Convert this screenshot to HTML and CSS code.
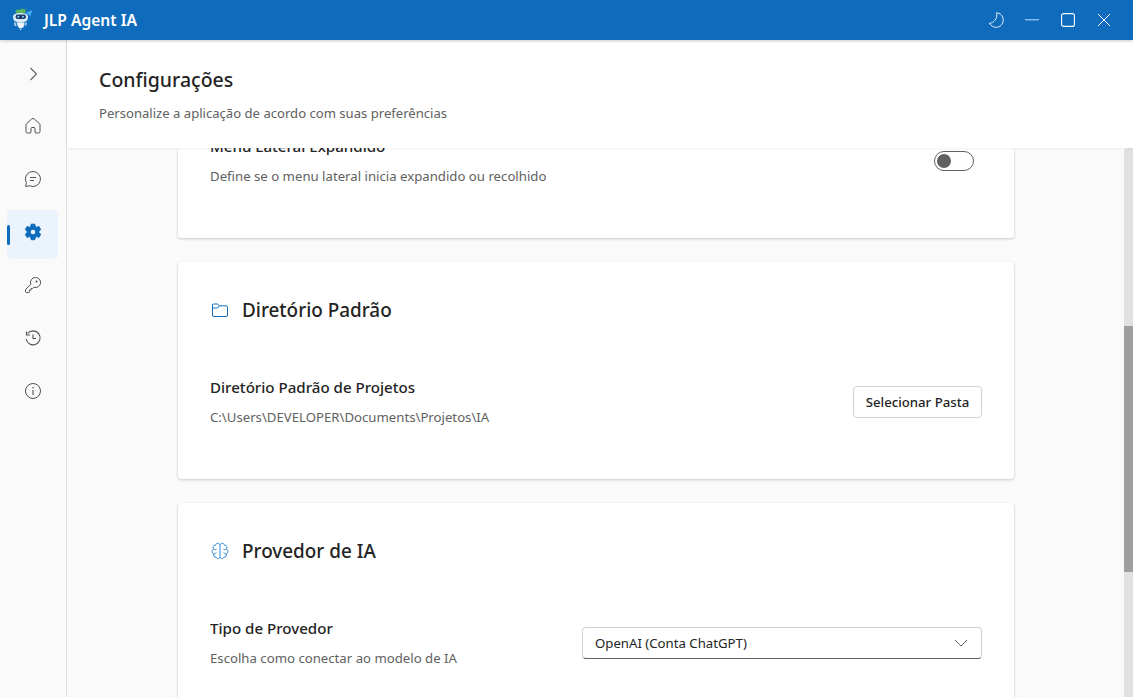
FILE: index.html
```html
<!DOCTYPE html>
<html lang="pt">
<head>
<meta charset="utf-8">
<title>JLP Agent IA</title>
<link rel="stylesheet" href="styles.css">
</head>
<body>
<div class="app">
  <header class="titlebar">
    <div class="brand">
      <svg class="logo" width="24" height="24" viewBox="0 0 24 24">
        <path d="M5 4 L7 1.500 L10 2 L11 .5 L16 1.500 L15 5 L8 5.500 Z" fill="#57b55a"/>
        <path d="M15.500 5 L22.500 2 L20 8.500 L18.500 6.500 Z" fill="#45aef2"/>
        <path d="M3 9 C3 6 6 5 10.500 5 C15 5 18 6 18 9 L17.500 11.500 C17 13.500 14 14.500 10.500 14.500 C7 14.500 4 13.500 3.500 11.500 Z" fill="#dcedf9"/>
        <rect x="5.500" y="6.500" width="10.500" height="4.500" rx="2.200" fill="#1d3a6b"/>
        <circle cx="8.300" cy="8.700" r="1" fill="#7fd6ff"/>
        <circle cx="13" cy="8.700" r="1" fill="#7fd6ff"/>
        <path d="M6.500 14.500 H14.500 L13.800 18.500 C13 20.500 9 20.500 8 18.500 Z" fill="#f1f7fc"/>
        <path d="M4 14 L6 15 L6.500 18 L4.500 18 Z M17 14 L15 15 L14.500 18 L16.500 17 Z" fill="#a9d2ef"/>
        <path d="M9 20.500 L10.500 22.500 L12 20.500 Z" fill="#a9d2ef"/>
      </svg>
      <span class="app-name">JLP Agent IA</span>
    </div>
    <div class="window-controls">
      <svg class="ctl" width="16" height="16" viewBox="0 0 16 16" fill="none"><path d="M8.500 .8 C12 .8 15.200 3.700 15.200 8 C15.200 12.300 12 15.300 8.200 15.300 C5.500 15.300 3 13.900 1.300 11.300 C5.600 11.300 10 6.500 8.500 .8 Z" stroke="#e3eef8" stroke-width="1"/></svg>
      <svg class="ctl" width="16" height="16" viewBox="0 0 16 16"><rect x="1" y="7" width="14" height="1.400" fill="#8fbbe4"/></svg>
      <svg class="ctl" width="16" height="16" viewBox="0 0 16 16" fill="none"><rect x="1.600" y="1.600" width="12.800" height="12.800" rx="2" stroke="#fff" stroke-width="1.100"/></svg>
      <svg class="ctl" width="16" height="16" viewBox="0 0 16 16" fill="none"><path d="M2 2 L14 14 M14 2 L2 14" stroke="#fff" stroke-width="1"/></svg>
    </div>
  </header>

  <div class="body">
    <nav class="sidebar">
      <div class="nav-item nav-toggle"><svg width="20" height="20" viewBox="0 0 20 20" fill="none"><path d="M7.500 4 L13.500 10 L7.500 16" stroke="#616161" stroke-width="1.100"/></svg></div>
      <div class="nav-item"><svg width="20" height="20" viewBox="0 0 20 20" fill="none"><path d="M8.600 3.100 a2 2 0 0 1 2.800 0 L16.400 7.600 a2 2 0 0 1 .6 1.400 V15.500 a1.500 1.500 0 0 1 -1.500 1.500 H13 a1 1 0 0 1 -1 -1 V12.500 a1 1 0 0 0 -1 -1 H9 a1 1 0 0 0 -1 1 V16 a1 1 0 0 1 -1 1 H4.500 A1.500 1.500 0 0 1 3 15.500 V9 a2 2 0 0 1 .6 -1.400 Z" stroke="#505050"/></svg></div>
      <div class="nav-item"><svg width="20" height="20" viewBox="0 0 20 20" fill="none"><path d="M10 2.500 a7.500 7.500 0 1 1 -3.400 14.200 L2.600 17.500 L3.400 13.600 A7.500 7.500 0 0 1 10 2.500 Z" stroke="#505050"/><path d="M7 8.500 H13 M7 11.500 H11" stroke="#505050"/></svg></div>
      <div class="nav-item active"><span class="active-bar"></span><svg width="20" height="20" viewBox="0 0 20 20"><path d="M8.200 2.200 h3.600 l.5 2.400 1.300.7 2.300-.8 1.800 3.100-1.800 1.600 v1.500 l1.800 1.600-1.800 3.100-2.300-.8-1.300.7-.5 2.400 H8.200 l-.5-2.400-1.300-.7-2.300.8-1.800-3.100 1.800-1.600 V9.200 L2.300 7.600 4.100 4.500 6.400 5.300 7.700 4.600 Z" fill="#0f6cbd" stroke="#0f6cbd" stroke-linejoin="round"/><circle cx="10" cy="10" r="2.300" fill="#ebf3fc"/></svg></div>
      <div class="nav-item"><svg width="20" height="20" viewBox="0 0 20 20" fill="none"><path d="M12.500 2.500 a5 5 0 1 1 -1.600 9.700 L9.500 13.600 H8 V15.100 H6.500 V16.600 a.9 .9 0 0 1 -.9 .9 H3.400 a.9 .9 0 0 1 -.9 -.9 V15 a1 1 0 0 1 .3 -.7 L7.800 9.300 A5 5 0 0 1 12.500 2.500 Z" stroke="#505050"/><circle cx="13.500" cy="6.500" r="1" fill="#505050"/></svg></div>
      <div class="nav-item"><svg width="20" height="20" viewBox="0 0 20 20" fill="none"><path d="M4.700 5.400 A7 7 0 1 1 3.200 11" stroke="#505050" stroke-width="1.100"/><path d="M3.500 3.500 V7 H7" stroke="#505050" stroke-width="1.100"/><path d="M10 6.500 V10.500 H13" stroke="#505050" stroke-width="1.100"/></svg></div>
      <div class="nav-item"><svg width="20" height="20" viewBox="0 0 20 20" fill="none"><circle cx="10" cy="10" r="7.500" stroke="#505050"/><path d="M10 9 V14" stroke="#505050" stroke-width="1.100"/><circle cx="10" cy="6.700" r=".8" fill="#505050"/></svg></div>
    </nav>

    <div class="main">
      <div class="page-header">
        <h1 class="page-title">Configurações</h1>
        <p class="page-sub">Personalize a aplicação de acordo com suas preferências</p>
      </div>
      <div class="content-wrap">
        <div class="content">
          <section class="card card-first">
            <div class="row row-first">
              <div class="row-text">
                <div class="row-label">Menu Lateral Expandido</div>
                <div class="row-desc">Define se o menu lateral inicia expandido ou recolhido</div>
              </div>
              <div class="toggle"><span class="knob"></span></div>
            </div>
          </section>

          <section class="card card-dir">
            <div class="card-head">
              <svg width="20" height="20" viewBox="0 0 20 20" fill="none"><path d="M3.500 4 H7.500 L9.500 5.800 H16 a1.500 1.500 0 0 1 1.500 1.500 V15 a1.500 1.500 0 0 1 -1.500 1.500 H4 A1.500 1.500 0 0 1 2.500 15 V5 A1 1 0 0 1 3.500 4 Z M2.500 8 H7.500 L9.500 5.800" stroke="#0f6cbd"/></svg>
              <h2 class="card-title">Diretório Padrão</h2>
            </div>
            <div class="row row-dir">
              <div class="row-text">
                <div class="row-label">Diretório Padrão de Projetos</div>
                <div class="row-desc">C:\Users\DEVELOPER\Documents\Projetos\IA</div>
              </div>
              <button class="btn">Selecionar Pasta</button>
            </div>
          </section>

          <section class="card card-prov">
            <div class="card-head">
              <svg width="20" height="20" viewBox="0 0 20 20" fill="none"><path d="M10 4 V16 M10 4 C9.500 1.800 6 1.600 5.500 4.200 C3.200 4.300 2.500 6.700 3.600 8 C1.600 9 1.700 12 3.700 12.800 C3 14.800 4.500 16.400 6 16 C7 18.300 9.600 18 10 16 M10 4 C10.500 1.800 14 1.600 14.500 4.200 C16.800 4.300 17.500 6.700 16.400 8 C18.400 9 18.300 12 16.300 12.800 C17 14.800 15.500 16.400 14 16 C13 18.300 10.400 18 10 16 M3.600 8 C4.500 8.800 5.500 8.800 6.500 8.300 M16.400 8 C15.500 8.800 14.500 8.800 13.500 8.300 M3.700 12.800 C4.800 12.900 5.700 12.400 6.300 11.500 M16.300 12.800 C15.200 12.900 14.300 12.400 13.700 11.500" stroke="#2b88d8"/></svg>
              <h2 class="card-title">Provedor de IA</h2>
            </div>
            <div class="row row-prov">
              <div class="row-text">
                <div class="row-label">Tipo de Provedor</div>
                <div class="row-desc">Escolha como conectar ao modelo de IA</div>
              </div>
              <div class="select">
                <span>OpenAI (Conta ChatGPT)</span>
                <svg width="14" height="14" viewBox="0 0 14 14" fill="none"><path d="M1 4 L7 10 L13 4" stroke="#616161"/></svg>
              </div>
            </div>
          </section>
        </div>
        <div class="scrollbar"><div class="thumb"></div></div>
      </div>
    </div>
  </div>
</div>
</body>
</html>
```

FILE: styles.css
```css
* { box-sizing: border-box; }
html, body { margin: 0; height: 100%; overflow: hidden; }
body { font-family: "Noto Sans", "Open Sans", sans-serif; color: #242424; background: #fafafa; }
.app { display: flex; flex-direction: column; height: 697px; }

.titlebar { height: 40px; flex: none; background: #0f6cbd; display: flex; align-items: center; justify-content: space-between; box-shadow: 0 1px 3px rgba(0,0,0,.2); position: relative; z-index: 3; }
.brand { display: flex; align-items: center; padding-left: 10px; gap: 9px; }
.logo { display: block; }
.app-name { color: #fff; font-size: 15.600px; font-weight: 600; margin-left: 1px; }
.window-controls { display: flex; align-items: center; gap: 20px; padding-right: 21px; }
.ctl { display: block; }

.body { flex: 1; display: flex; min-height: 0; }
.sidebar { width: 67px; flex: none; background: #fafafa; border-right: 1px solid #e0e0e0; display: flex; flex-direction: column; align-items: flex-start; padding: 12px 0 0 7px; gap: 4px; }
.nav-item { width: 51px; height: 49px; padding-bottom: 5px; display: flex; align-items: center; justify-content: center; position: relative; border-radius: 4px; }
.nav-toggle { margin-bottom: -1px; }
.nav-item.active { background: #ebf3fc; }
.active-bar { position: absolute; left: 0; top: 15px; width: 3px; height: 20px; border-radius: 2px; background: #0f6cbd; }

.main { flex: 1; display: flex; flex-direction: column; min-width: 0; background: #fafafa; }
.page-header { height: 108px; flex: none; background: #fff; padding: 26px 32px 0; box-shadow: 0 1px 2px rgba(0,0,0,.06); position: relative; z-index: 2; }
.page-title { margin: 0; font-size: 19.500px; line-height: 28px; font-weight: 500; }
.page-sub { margin: 9px 0 0; font-size: 13.100px; line-height: 20px; color: #616161; }

.content-wrap { flex: 1; display: flex; min-height: 0; overflow: hidden; }
.content { flex: 1; overflow: hidden; display: flex; flex-direction: column; align-items: center; padding-left: 1px; gap: 24px; }
.card { width: 836px; flex: none; background: #fff; border-radius: 4px; box-shadow: 0 1px 3px rgba(0,0,0,.2); padding: 0 32px; }
.card-first { height: 90px; }
.card-dir { height: 217px; }
.card-prov { height: 260px; }
.card-head { display: flex; align-items: center; gap: 12px; padding-top: 34px; height: 62px; }
.card-title { margin: 0; font-size: 18.900px; line-height: 28px; font-weight: 500; }

.row { display: flex; justify-content: space-between; align-items: center; }
.row-first { margin-top: -13px; align-items: flex-start; }
.row-dir { margin-top: 52px; }
.row-prov { margin-top: 52px; }
.row-label { font-size: 15.100px; line-height: 22px; font-weight: 500; }
.row-desc { font-size: 13.200px; line-height: 20px; color: #616161; margin-top: 9px; }

.toggle { width: 40px; height: 20px; border: 1px solid #616161; border-radius: 10px; margin: 16px 8px 0 0; padding: 2px; background: #fff; }
.knob { display: block; width: 14px; height: 14px; border-radius: 50%; background: #616161; }

.btn { width: 129px; height: 32px; background: #fff; border: 1px solid #d1d1d1; border-radius: 4px; font: 500 13.200px "Noto Sans", sans-serif; color: #242424; padding: 0; }
.select { width: 400px; height: 32px; display: flex; align-items: center; justify-content: space-between; padding: 0 13px 0 12px; font-size: 13.200px; background: #fff; border: 1px solid #d1d1d1; border-bottom-color: #616161; border-radius: 4px; }

.scrollbar { width: 9px; flex: none; background: #e0e0e0; border-radius: 4px 0 0 0; padding-top: 178px; }
.thumb { height: 246px; background: #9e9e9e; }
```
